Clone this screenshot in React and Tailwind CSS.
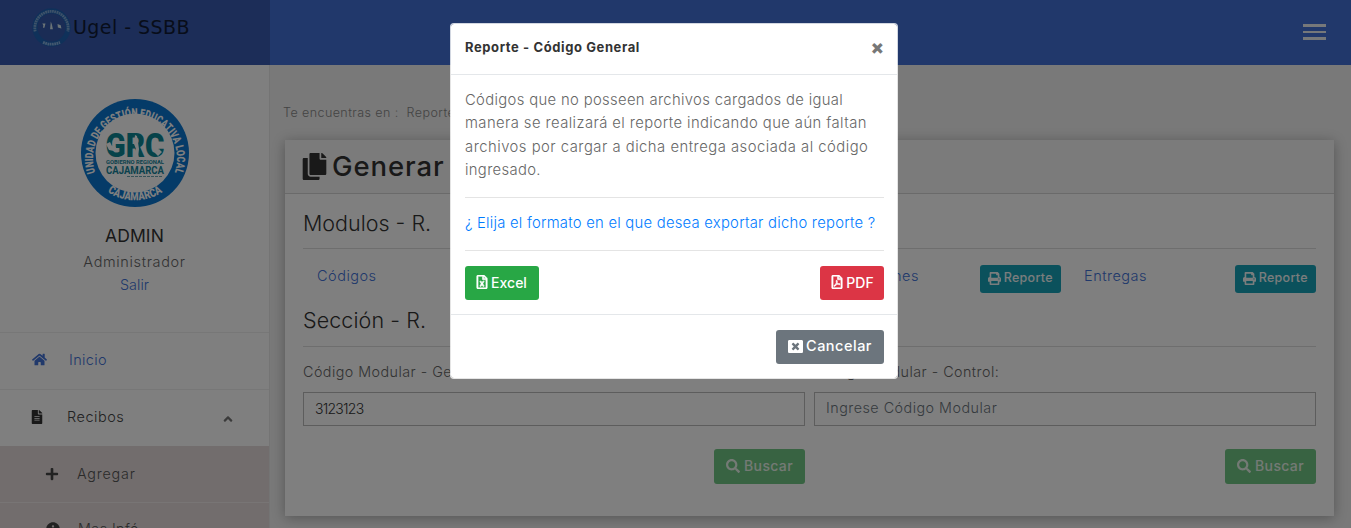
import { FaHome, FaFileAlt, FaPlus, FaInfoCircle, FaCopy, FaPrint, FaSearch, FaRegFileExcel, FaRegFilePdf, FaWindowClose, FaAngleUp } from "react-icons/fa";

function Seal({ className, small }) {
  return (
    <svg viewBox="0 0 110 110" className={className}>
      <defs>
        <path id="sealTop" d="M 15.2 74 A 42 42 0 1 1 94.800 74" />
        <path id="sealBottom" d="M 13 79 A 49.500 49.500 0 0 0 97 79" />
      </defs>
      <circle cx="55" cy="55" r="54" fill={small ? "#1f62b4" : "#0a76d0"} />
      <circle cx="55" cy="55" r="39.500" fill={small ? "#3458aa" : "#fff"} />
      {small ? (
        <>
          <path d="M9 66 A47 47 0 1 1 101 66" fill="none" stroke="#7ba4d2" strokeWidth="8" strokeDasharray="5 1.500" />
          <path d="M31 97 Q55 107 79 97" fill="none" stroke="#86b0de" strokeWidth="8" strokeDasharray="5 1.500" />
          <path d="M29 44h9l-3 12h-4l1-7zM53 38l3 8 3 14h-8zM72 45l9 4 2 9-10-3z" fill="#d7e8ee" />
        </>
      ) : (
        <>
          <g fill="#fff" fontFamily="Roboto" fontWeight="900">
            <text textAnchor="middle" fontSize="11.5"><textPath href="#sealTop" startOffset="50%" textLength="160" lengthAdjust="spacingAndGlyphs">UNIDAD DE GESTIÓN EDUCATIVA LOCAL</textPath></text>
            <text textAnchor="middle" fontSize="11.5"><textPath href="#sealBottom" startOffset="50%" textLength="58" lengthAdjust="spacingAndGlyphs">CAJAMARCA</textPath></text>
          </g>
          <text x="55" y="59" textAnchor="middle" fontFamily="Roboto" fontWeight="900" fontSize="33" textLength="59" lengthAdjust="spacingAndGlyphs" fill="#0d8694">GRC</text>
          <path d="M26 46l4-2 2 4 4 1-2 4-5-1zM55 37l2 1 1 6 1 7-1 9h-3l1-9-2-5zM74 54l5-3 3 3-4 4z" fill="#fff" />
          <text x="55" y="66" textAnchor="middle" fontFamily="Roboto" fontWeight="700" fontSize="6" textLength="58" lengthAdjust="spacingAndGlyphs" fill="#16839a">GOBIERNO REGIONAL</text>
          <text x="55" y="76" textAnchor="middle" fontFamily="Roboto" fontWeight="700" fontSize="11" textLength="58" lengthAdjust="spacingAndGlyphs" fill="#16839a">CAJAMARCA</text>
          <path d="M47 78.500h35" stroke="#6aa4b0" strokeWidth="1" strokeDasharray="3 1" />
        </>
      )}
    </svg>
  );
}

function ReportButton() {
  return (
    <button className="flex h-7 w-[81.500px] items-center justify-center gap-[3px] rounded-[3px] bg-[#17a2b8] pb-0.5 text-[12.5px] font-medium tracking-[0.3px] text-[#f4fafb]">
      <FaPrint className="size-[13px]" />Reporte
    </button>
  );
}

function Field({ label, value, placeholder }) {
  return (
    <div className="flex flex-col">
      <label className="h-[32px] text-[14.3px] leading-[23px] tracking-[0.47px] whitespace-nowrap text-[#666]">{label}</label>
      <div className={value ? "flex h-[34px] items-center border border-[#bbb] px-[11px] pb-0.5 text-[14px] tracking-[-0.75px] text-[#333]" : "flex h-[34px] items-center border border-[#bbb] px-[11px] pb-0.5 text-[14.3px] tracking-[0.5px] text-[#6c757d]"}>{value || placeholder}</div>
      <button className="mt-[23px] flex h-[35px] w-[91px] items-center justify-center gap-1 self-end rounded-[3px] bg-[#71c684] pb-0.5 text-[14px] font-medium tracking-[0.35px] text-[#e8f4ea]">
        <FaSearch className="size-[14px]" />Buscar
      </button>
    </div>
  );
}

export default function App() {
  return (
    <div className="relative h-[528px] w-[1351px] overflow-hidden bg-[#f2f2f2] font-['Inter','Liberation_Sans',sans-serif] font-light">
      <header className="flex h-[65px]">
        <div className="flex w-[270px] items-start bg-[#385ab0] pt-2 pl-8">
          <Seal small className="size-[39px]" />
          <span className="ml-[2px] mt-[5px] font-['DejaVu_Sans',sans-serif] text-[19px] leading-7 font-normal tracking-[0.45px] text-[#101a35]">Ugel - SSBB</span>
        </div>
        <div className="flex flex-1 items-start justify-end bg-[#4270d6] pt-6 pr-[25px]">
          <div className="flex w-[23px] flex-col gap-[4px]">
            <i className="h-[2.500px] bg-[#edf0f5]" /><i className="h-[2.500px] bg-[#edf0f5]" /><i className="h-[2.500px] bg-[#edf0f5]" />
          </div>
        </div>
      </header>
      <div className="flex">
        <aside className="h-[463px] w-[270px] shrink-0 border-r border-[#e8e8e8] bg-white">
          <div className="flex h-[268px] flex-col items-center border-b border-[#eee] pt-[33px]">
            <Seal className="size-[110px]" />
            <b className="mt-[16px] text-[17.5px] leading-6 font-normal tracking-[0.1px] text-[#333]">ADMIN</b>
            <span className="mt-[2px] text-[14.5px] leading-[23px] tracking-[0.65px] text-[#666]">Administrador</span>
            <span className="text-[14.3px] leading-[23px] tracking-[0.1px] text-[#4272d7]">Salir</span>
          </div>
          <div className="flex h-[57px] items-center border-b border-[#eee] pl-8 text-[14.5px] text-[#4272d7]">
            <FaHome className="size-[15px] -mt-1" /><span className="ml-[22px] -mt-0.5 tracking-[0.35px]">Inicio</span>
          </div>
          <div className="flex h-[56px] items-center pl-[30px] text-[14.5px] text-[#444]">
            <FaFileAlt className="size-[14px] -mt-0.5 text-[#333]" /><span className="ml-[23px] -mt-0.5 tracking-[0.5px]">Recibos</span>
            <FaAngleUp className="mt-0.5 ml-[97px] size-[14px] text-[#777]" />
          </div>
          <div className="bg-[#e4dada] text-[14.3px] text-[#555]">
            <div className="flex h-[57px] items-center border-b border-[#f1eaea] pl-[45px]">
              <FaPlus className="size-[14px] text-[#444]" /><span className="ml-[18px] tracking-[0.8px]">Agregar</span>
            </div>
            <div className="flex h-[52px] items-center pl-[46px]">
              <FaInfoCircle className="size-[14px] text-[#444]" /><span className="ml-[18px] tracking-[0.45px]">Mas Infó</span>
            </div>
          </div>
        </aside>
        <main className="flex-1 pt-9 pr-[17px] pl-[15px]">
          <p className="-ml-[2px] h-[39px] text-[12.5px] leading-6 tracking-[0.43px] text-[#888]">Te encuentras en :&nbsp; Reportes</p>
          <section className="h-[376px] bg-white shadow-[0_2px_12px_rgba(0,0,0,0.3)]">
            <div className="flex h-[54px] items-center border-b border-[#d4d4d4] bg-[#f7f7f7] pl-[16px] text-[#333]">
              <FaCopy className="size-[27px]" />
              <h1 className="ml-1 text-[27.500px] font-[450] tracking-[0.9px]">Generar Reportes</h1>
            </div>
            <div className="pr-[18px] pl-[18px]">
              <h2 className="h-[55px] border-b border-[#ddd] pt-[14px] text-[21.500px] leading-[30px] text-[#333]">Modulos - R.</h2>
              <div className="flex h-[56px] pt-[16px] text-[14.5px] tracking-[0.5px] text-[#4272d7]">
                <div className="flex w-[257px] pl-[14px]">Códigos</div>
                <div className="flex w-[257px] pl-[14px]">Recibos</div>
                <div className="flex w-[244px] justify-between pl-[6px]"><span>Resoluciones</span><ReportButton /></div>
                <div className="flex flex-1 justify-between pl-[23px]"><span>Entregas</span><ReportButton /></div>
              </div>
              <h2 className="h-[42px] border-b border-[#ddd] text-[21.500px] leading-[30px] tracking-[0.1px] text-[#333]">Sección - R.</h2>
              <div className="grid grid-cols-2 gap-[9px] pt-[13px]">
                <Field label="Código Modular - General:" value="3123123" />
                <Field label="Código Modular - Control:" placeholder="Ingrese Código Modular" />
              </div>
            </div>
          </section>
        </main>
      </div>
      <div className="absolute inset-0 flex items-start bg-black/50 pt-[23px] pl-[450px]">
        <div role="dialog" className="h-[356px] w-[448px] rounded-[4px] border border-white/80 bg-white bg-clip-padding">
          <div className="flex h-[51px] items-center justify-between border-b border-[#e4e7ea] pr-[13px] pb-[3px] pl-[14px] text-[#333]">
            <h3 className="text-[13px] font-bold tracking-[0.6px]">Reporte - Código General</h3>
            <span className="text-[19px] leading-none font-black text-[#777]">×</span>
          </div>
          <div className="pt-[14px] pr-[13px] pl-[14px]">
            <p className="h-[109px] border-b border-[#e4e4e4] text-[14.800px] leading-[23.300px] whitespace-nowrap text-[#666]">
              <span className="tracking-[0.35px]">Códigos que no posseen archivos cargados de igual</span><br />
              <span className="tracking-[0.42px]">manera se realizará el reporte indicando que aún faltan</span><br />
              <span className="tracking-[0.5px]">archivos por cargar a dicha entrega asociada al código</span><br />
              <span className="tracking-[0.35px]">ingresado.</span>
            </p>
            <p className="h-[53px] border-b border-[#e4e4e4] pt-[14px] text-[14.800px] leading-[23px] tracking-[0.25px] whitespace-nowrap text-[#007bff]">¿ Elija el formato en el que desea exportar dicho reporte ?</p>
            <div className="flex h-[63px] items-start justify-between pt-[15px] text-[14px] font-medium text-white">
              <button className="flex h-[34px] w-[74px] items-center justify-center gap-[2px] rounded-[3px] bg-[#28a745] pr-0.5 pb-0.5"><FaRegFileExcel className="size-[14px] stroke-white stroke-[20]" />Excel</button>
              <button className="flex h-[34px] w-[64px] items-center justify-center gap-[2px] rounded-[3px] bg-[#dc3545] pb-0.5"><FaRegFilePdf className="size-[14px] stroke-white stroke-[20]" />PDF</button>
            </div>
          </div>
          <div className="flex justify-end border-t border-[#e4e7ea] px-[13px] pt-[15px]">
            <button className="flex h-[34px] w-[108px] items-center justify-center gap-[3px] rounded-[3px] bg-[#6c757d] pb-0.5 text-[14.5px] font-medium tracking-[0.5px] text-white"><FaWindowClose className="size-[15px]" />Cancelar</button>
          </div>
        </div>
      </div>
    </div>
  );
}
